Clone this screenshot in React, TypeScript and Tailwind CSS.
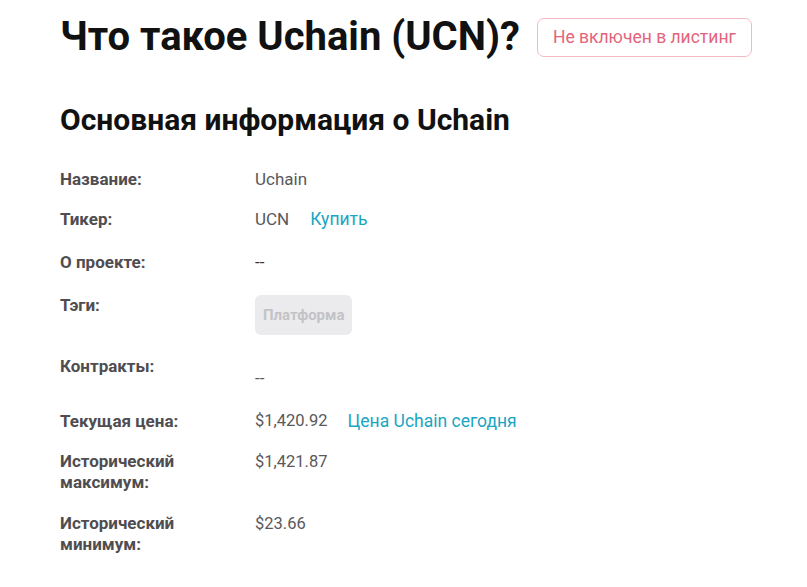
import React from 'react';

const rows = [
  { label: 'Название:', value: 'Uchain' },
];

export default function App() {
  return (
    <div className="min-h-screen bg-white pl-[60px] pt-[13px] font-['Roboto',sans-serif]">
      <div className="flex items-center gap-[17px]">
        <h1 className="text-[40px] leading-[48px] font-bold text-[#111111]">Что такое Uchain (UCN)?</h1>
        <div className="h-[39px] px-[15px] flex items-center rounded-[7px] border border-[#f4b8c3] text-[17.5px] text-[#e3647b]">
          Не включен в листинг
        </div>
      </div>

      <h2 className="mt-[41px] text-[30px] leading-[36px] font-bold text-[#111111]">Основная информация о Uchain</h2>

      <div className="mt-[29px] text-[17px] leading-6">
        <div className="flex">
          <div className="w-[195px] font-bold text-[#4f4d50]">{rows[0].label}</div>
          <div className="text-[#59585b]">{rows[0].value}</div>
        </div>

        <div className="flex mt-4">
          <div className="w-[195px] font-bold text-[#4f4d50]">Тикер:</div>
          <div className="text-[#59585b]">UCN</div>
          <a className="ml-[21px] text-[17.5px] text-[#1aa5c2]">Купить</a>
        </div>

        <div className="flex mt-[19px]">
          <div className="w-[195px] font-bold text-[#4f4d50]">О проекте:</div>
          <div className="text-[#333333]">--</div>
        </div>

        <div className="flex items-start mt-[19px]">
          <div className="w-[195px] font-bold text-[#4f4d50]">Тэги:</div>
          <div className="mt-[2px] h-10 px-2 flex items-center rounded-md bg-[#ebebed] text-[15px] font-bold text-[#c3c3c7]">Платформа</div>
        </div>

        <div className="flex mt-[19px]">
          <div className="w-[195px] font-bold text-[#4f4d50]">Контракты:</div>
          <div className="mt-3 text-[#59585b]">--</div>
        </div>

        <div className="flex mt-[19px]">
          <div className="w-[195px] font-bold text-[#4f4d50]">Текущая цена:</div>
          <div className="text-[16.5px] text-[#59585b]">$1,420.92</div>
          <a className="ml-[20px] text-[17.5px] text-[#1aa5c2]">Цена Uchain сегодня</a>
        </div>

        <div className="flex mt-[18px] leading-[21px]">
          <div className="w-[195px] font-bold text-[#4f4d50]">Исторический<br />максимум:</div>
          <div className="text-[16.5px] text-[#59585b]">$1,421.87</div>
        </div>

        <div className="flex mt-5 leading-[21px]">
          <div className="w-[195px] font-bold text-[#4f4d50]">Исторический<br />минимум:</div>
          <div className="text-[16.5px] text-[#59585b]">$23.66</div>
        </div>
      </div>
    </div>
  );
}
